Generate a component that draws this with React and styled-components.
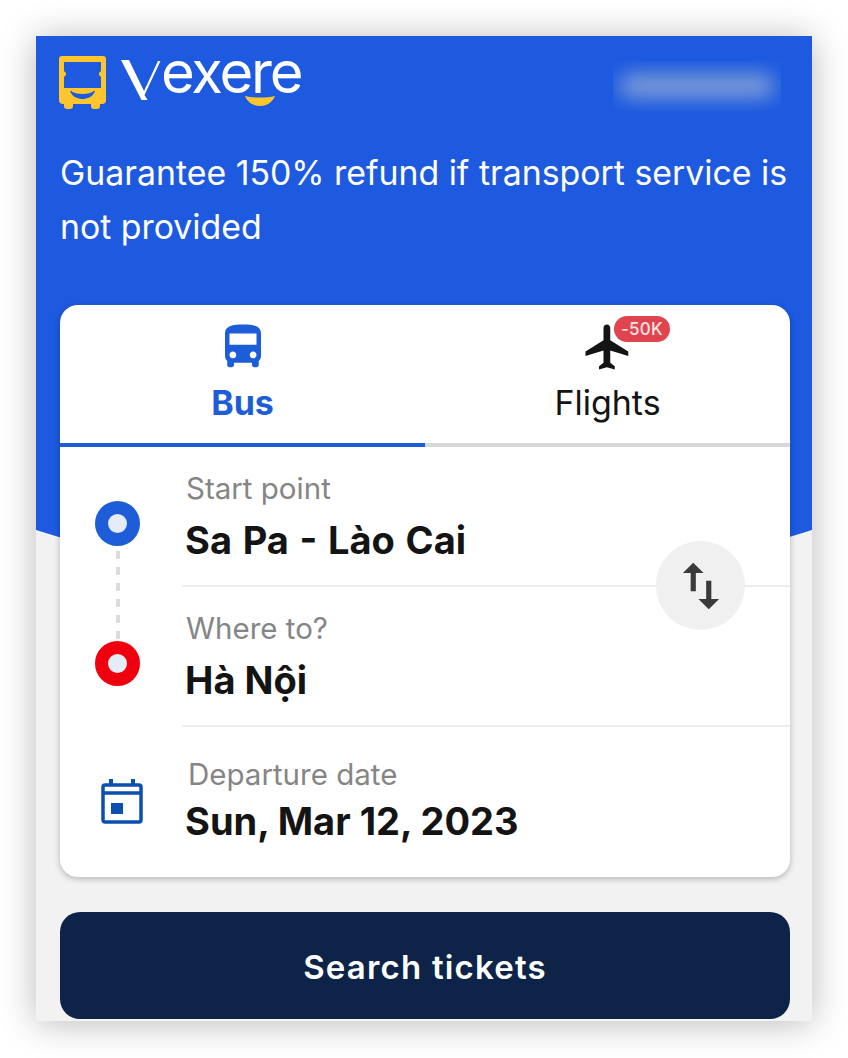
import React from "react";
import styled, { createGlobalStyle } from "styled-components";

const Global = createGlobalStyle`
  html, body { margin: 0; padding: 0; background: #fff; }
  body { font-family: Inter, "Liberation Sans", sans-serif; }
  * { box-sizing: border-box; }
`;

const Page = styled.div`
  width: 848px;
  height: 1058px;
  padding: 36px;
  overflow: hidden;
`;

const Screen = styled.main`
  position: relative;
  width: 776px;
  height: 985px;
  padding: 0 22px 0 24px;
  background: #f2f2f2;
  box-shadow: 0 2px 34px rgba(0, 0, 0, 0.28);
  overflow: hidden;
`;

/* Curved blue band behind the header and the top of the card */
const Backdrop = styled.div`
  position: absolute;
  inset: 0;
  background: #1d5ae0;
  clip-path: path("M0 0H776V494Q388 618 0 494Z");
`;

const Content = styled.div`
  position: relative;
  display: flex;
  flex-direction: column;
`;

const TopBar = styled.header`
  display: flex;
  justify-content: space-between;
  align-items: flex-start;
  height: 72px;
  padding-top: 19px;
`;

const Logo = styled.div`
  position: relative;
  display: flex;
  align-items: flex-start;
  height: 52px;
  margin-left: -2px;
`;

const Wordmark = styled.span`
  position: relative;
  margin: -15px 0 0 -1px;
  font-size: 58px;
  line-height: 64px;
  font-weight: 400;
  letter-spacing: -2.2px;
  color: #fff;
`;

const Smile = styled.svg`
  position: absolute;
  left: 186px;
  top: 40px;
`;

const BlurredName = styled.div`
  width: 168px;
  height: 50px;
  margin: 6px 9px 0 0;
  overflow: hidden;
  &::before {
    content: "";
    display: block;
    margin: 13px 6px;
    height: 24px;
    border-radius: 12px;
    background: #7f9cd8;
    filter: blur(10px);
  }
`;

const Tagline = styled.p`
  margin: 38px 0 51px;
  font-size: 33.850px;
  line-height: 54px;
  font-weight: 400;
  letter-spacing: 0;
  color: #fff;
`;

const Card = styled.section`
  height: 572px;
  border-radius: 18px;
  background: #fff;
  box-shadow: 0 2px 6px rgba(0, 0, 0, 0.25);
  overflow: hidden;
`;

const Tabs = styled.div`
  display: grid;
  grid-template-columns: 365px 1fr;
  height: 142px;
`;

const Tab = styled.div`
  position: relative;
  display: flex;
  flex-direction: column;
  align-items: center;
  padding-top: 15px;
  border-bottom: 4px solid ${(p) => (p.$active ? "#1d5ed8" : "#d8d8d8")};
  color: ${(p) => (p.$active ? "#1d5ed8" : "#141414")};
  font-size: 34px;
  font-weight: ${(p) => (p.$active ? 700 : 400)};
  line-height: 40px;
`;

const TabIcon = styled.svg`
  display: block;
  width: 54px;
  height: 54px;
  margin-bottom: 9px;
  fill: currentColor;
`;

const Badge = styled.span`
  position: absolute;
  left: 189px;
  top: 11px;
  width: 56px;
  height: 26px;
  border-radius: 13px;
  background: #e0454f;
  color: #f6e3e3;
  font-size: 17px;
  font-weight: 500;
  line-height: 26px;
  text-align: center;
  letter-spacing: 0.3px;
`;

const Route = styled.div`
  position: relative;
  display: grid;
  grid-template-columns: 122px 1fr;
`;

const Markers = styled.div`
  display: flex;
  flex-direction: column;
  align-items: center;
  padding-top: 54px;
  margin-right: 7px;
`;

const Dot = styled.span`
  flex: none;
  width: 45px;
  height: 45px;
  border-radius: 50%;
  border: 13px solid ${(p) => p.$color};
  background: #e4edf7;
`;

const DashLine = styled.span`
  flex: none;
  width: 4px;
  height: 91px;
  margin: 2px 0;
  background: repeating-linear-gradient(
    to bottom,
    transparent 0 3px,
    #dcdcdc 3px 11px,
    transparent 11px 16px
  );
`;

const DateIcon = styled.svg`
  flex: none;
  margin: 92px 0 0 9px;
`;

const Fields = styled.div`
  display: flex;
  flex-direction: column;
`;

const Field = styled.div`
  height: 140px;
  padding: ${(p) => (p.$date ? "30px 0 0 6px" : "24px 0 0 4px")};
  border-bottom: ${(p) => (p.$date ? "none" : "2px solid #ececec")};
`;

const Label = styled.div`
  font-size: 29.500px;
  line-height: 34px;
  color: #858585;
`;

const Value = styled.div`
  margin-top: ${(p) => (p.$date ? "8px" : "13px")};
  margin-left: ${(p) => (p.$date ? "-3px" : "-1px")};
  font-size: 38px;
  line-height: 44px;
  font-weight: 700;
  word-spacing: ${(p) => p.$wordGap || 0}px;
  color: #141414;
`;

const SwapButton = styled.button`
  position: absolute;
  right: 45px;
  top: 94px;
  display: flex;
  align-items: center;
  justify-content: center;
  width: 89px;
  height: 89px;
  padding: 0;
  border: 0;
  border-radius: 50%;
  background: #f0f0f0;
  color: #3a3a3a;
`;

const SearchButton = styled.button`
  height: 107px;
  margin-top: 35px;
  padding-top: 3px;
  border: 0;
  border-radius: 20px;
  background: #0d2347;
  color: #fff;
  font-family: Inter, sans-serif;
  font-size: 33px;
  font-weight: 600;
  letter-spacing: 1.2px;
`;

const BusLogo = () => (
  <svg width="49" height="54" viewBox="0 0 49 54" style={{ marginRight: 13 }}>
    <path
      fill="#fdc62e"
      d="M4 1h41a3 3 0 0 1 3 3v41a4 4 0 0 1-4 4h-2v2a3 3 0 0 1-3 3h-3a3 3 0 0 1-3-3v-2H15v2a3 3 0 0 1-3 3H9a3 3 0 0 1-3-3v-2H5a4 4 0 0 1-4-4V4a3 3 0 0 1 3-3z"
    />
    <path fill="#1d5ae0" d="M6 7h37v9l-2 2v2l2 2v11H6V22l2-2v-2l-2-2z" />
    <path fill="#1d5ae0" d="M12 36h25c-2 6-8 8-12.500 8s-10.500-2-12.500-8z" />
    <path fill="#fdc62e" d="M12 35h25c-3 3-8 4-12.500 4s-9.500-1-12.500-4z" />
  </svg>
);

export default function App() {
  return (
    <Page>
      <Global />
      <Screen>
        <Backdrop />
        <Content>
          <TopBar>
            <Logo>
              <BusLogo />
              <svg width="42" height="50" viewBox="0 0 42 50">
                <path fill="#fff" d="M1 5h8l15 31L38 6h2.500L24.500 40l3 5h-6z" />
              </svg>
              <Wordmark>exere</Wordmark>
              <Smile width="32" height="12" viewBox="0 0 32 12">
                <path fill="#fdc62e" d="M1 1c8 2 22 2 30 0-3 7-9 10-15 10S4 8 1 1z" />
              </Smile>
            </Logo>
            <BlurredName />
          </TopBar>
          <Tagline>Guarantee 150% refund if transport service is not provided</Tagline>
          <Card>
            <Tabs>
              <Tab $active>
                <TabIcon viewBox="0 0 24 24">
                  <path d="M4 16c0 .88.39 1.670 1 2.220V20c0 .55.45 1 1 1h1c.55 0 1-.45 1-1v-1h8v1c0 .55.45 1 1 1h1c.55 0 1-.45 1-1v-1.780c.61-.55 1-1.340 1-2.220V6c0-3.500-3.580-4-8-4s-8 .5-8 4v10zm3.500 1c-.83 0-1.500-.67-1.500-1.500S6.670 14 7.500 14s1.500.67 1.500 1.500S8.330 17 7.500 17zm9 0c-.83 0-1.500-.67-1.500-1.500s.67-1.500 1.500-1.500 1.500.67 1.500 1.500-.67 1.500-1.500 1.500zm1.500-6H6V6h12v5z" />
                </TabIcon>
                Bus
              </Tab>
              <Tab>
                <TabIcon viewBox="0 0 24 24">
                  <path d="M21 16v-2l-8-5V3.500c0-.83-.67-1.500-1.500-1.500S10 2.670 10 3.500V9l-8 5v2l8-2.500V19l-2 1.500V22l3.500-1 3.500 1v-1.500L13 19v-5.500l8 2.500z" />
                </TabIcon>
                Flights
                <Badge>-50K</Badge>
              </Tab>
            </Tabs>
            <Route>
              <Markers>
                <Dot $color="#1d5ed8" />
                <DashLine />
                <Dot $color="#f0000f" />
                <DateIcon width="42" height="46" viewBox="0 0 42 46">
                  <path
                    fill="none"
                    stroke="#0d4fb0"
                    strokeWidth="3.500"
                    d="M4 7h34a2 2 0 0 1 2 2v33a2 2 0 0 1-2 2H4a2 2 0 0 1-2-2V9a2 2 0 0 1 2-2zM2 15h38"
                  />
                  <path fill="#0d4fb0" d="M8 1h4v7H8zM30 1h4v7h-4zM10 25h12v11H10z" />
                </DateIcon>
              </Markers>
              <Fields>
                <Field>
                  <Label>Start point</Label>
                  <Value $wordGap={1.7}>Sa Pa - Lào Cai</Value>
                </Field>
                <Field>
                  <Label>Where to?</Label>
                  <Value>Hà Nội</Value>
                </Field>
                <Field $date>
                  <Label>Departure date</Label>
                  <Value $date>Sun, Mar 12, 2023</Value>
                </Field>
              </Fields>
              <SwapButton aria-label="Swap">
                <svg width="62" height="62" viewBox="0 0 24 24" fill="currentColor">
                  <path d="M16 17.010V10h-2v7.010h-3L15 21l4-3.990h-3zM9 3L5 6.990h3V14h2V6.990h3L9 3z" />
                </svg>
              </SwapButton>
            </Route>
          </Card>
          <SearchButton>Search tickets</SearchButton>
        </Content>
      </Screen>
    </Page>
  );
}
